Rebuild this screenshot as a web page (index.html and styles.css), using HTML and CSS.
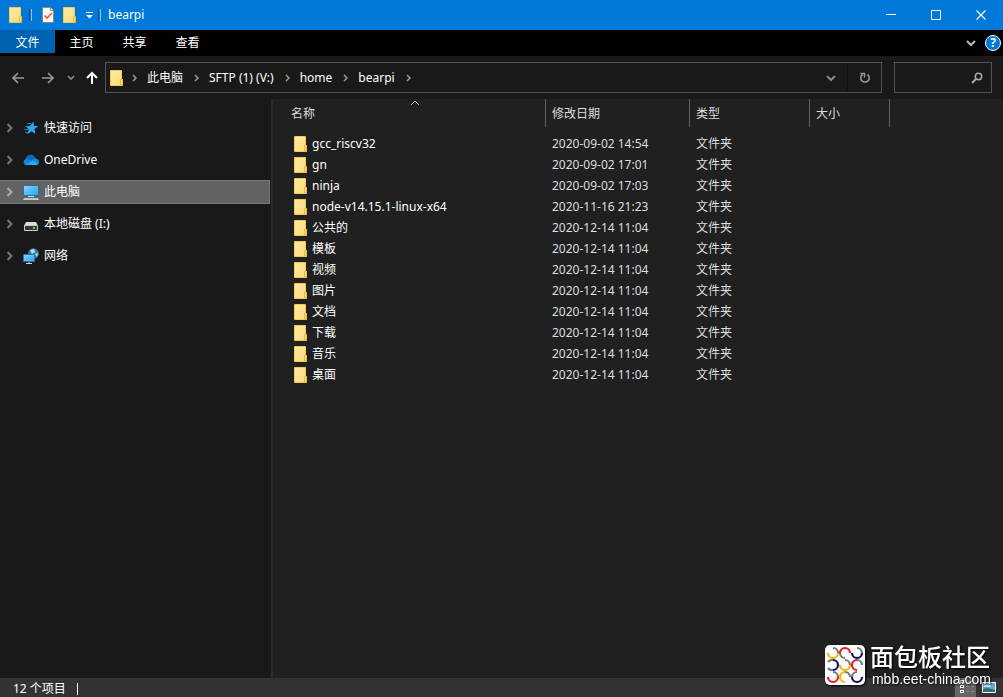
FILE: index.html
```html
<!DOCTYPE html>
<html lang="zh-CN">
<head>
<meta charset="utf-8">
<title>bearpi</title>
<link rel="stylesheet" href="styles.css">
</head>
<body>
<svg width="0" height="0" class="sprite" aria-hidden="true">
  <defs>
    <linearGradient id="gold" x2="1" y2="1"><stop offset="0" stop-color="#ffe9a6"/><stop offset="1" stop-color="#ffdc78"/></linearGradient>
    <linearGradient id="screen" x2="1" y2="1"><stop offset="0" stop-color="#8ad4ff"/><stop offset="1" stop-color="#20a4f8"/></linearGradient>
    <symbol id="folder" viewBox="0 0 16 16"><path d="M1.500.500h11v9h1v6h-12z" fill="url(#gold)" stroke="#f2cc4c"/><path d="M11.500 15V9.500h2V15z" fill="#ffe08a" stroke="#e5bb3a"/></symbol>
    <symbol id="right" viewBox="0 0 8 12"><path d="M1.500 2l4 4-4 4" fill="none" stroke="currentColor" stroke-width="2"/></symbol>
    <symbol id="crumb" viewBox="0 0 8 8"><path d="M2 1l3 3-3 3" fill="none" stroke="currentColor" stroke-width="1.500"/></symbol>
    <symbol id="down" viewBox="0 0 12 8"><path d="M2 2l4 4 4-4" fill="none" stroke="currentColor" stroke-width="2"/></symbol>
  </defs>
</svg>
<header class="titlebar">
  <svg class="icon" aria-hidden="true"><use href="#folder"/></svg>
  <span class="separator"></span>
  <button class="quick" aria-label="属性"><svg class="icon" viewBox="0 0 16 16"><path d="M2.500.500h8l3 3v12h-11z" fill="#f8f8f8" stroke="#888"/><path d="M10.500.500v3h3" fill="#fff" stroke="#888"/><path d="M4.500 8.500l2.500 2.500 5-5" fill="none" stroke="#ee6027" stroke-width="1.700"/></svg></button>
  <button class="quick" aria-label="新建文件夹"><svg class="icon"><use href="#folder"/></svg></button>
  <button class="customize" aria-label="自定义"><svg viewBox="0 0 8 8"><path d="M1 1.500h7" stroke="#fff"/><path d="M1 4h7L4.500 7.500z" fill="#fff"/></svg></button>
  <span class="separator"></span>
  <h1>bearpi</h1>
  <div class="window-controls">
    <button aria-label="最小化"><svg viewBox="0 0 12 12"><path d="M1 5.500h10" stroke="#fff"/></svg></button>
    <button aria-label="最大化"><svg viewBox="0 0 12 12"><path d="M1.500 1.500h9v9h-9z" fill="none" stroke="#fff"/></svg></button>
    <button aria-label="关闭"><svg viewBox="0 0 12 12"><path d="M1.500 1.500l9 9m0-9l-9 9" stroke="#fff" stroke-width="1.200"/></svg></button>
  </div>
</header>
<nav class="ribbon">
  <button class="tab file-tab">文件</button><button class="tab">主页</button><button class="tab">共享</button><button class="tab">查看</button>
  <button class="expand" aria-label="展开功能区"><svg class="down"><use href="#down"/></svg></button>
  <button class="help" aria-label="帮助">?</button>
</nav>
<div class="toolbar">
  <button class="nav" aria-label="后退"><svg viewBox="0 0 14 12"><path d="M13 6H2m5-5L2 6l5 5" fill="none" stroke="#999" stroke-width="1.700"/></svg></button>
  <button class="nav forward" aria-label="前进"><svg viewBox="0 0 14 12"><path d="M1 6h11M7 1l5 5-5 5" fill="none" stroke="#999" stroke-width="1.700"/></svg></button>
  <button class="recent" aria-label="最近浏览的位置"><svg viewBox="0 0 8 6"><path d="M1 1l3 3 3-3" fill="none" stroke="#8a8a8a" stroke-width="1.700"/></svg></button>
  <button class="up" aria-label="上移"><svg viewBox="0 0 14 14"><path d="M7 13V2M2 7l5-5 5 5" fill="none" stroke="#fff" stroke-width="2"/></svg></button>
  <div class="address">
    <svg class="icon" aria-hidden="true"><use href="#folder"/></svg>
    <svg class="crumb"><use href="#crumb"/></svg><button class="place">此电脑</button>
    <svg class="crumb"><use href="#crumb"/></svg><button class="place">SFTP (1) (V:)</button>
    <svg class="crumb"><use href="#crumb"/></svg><button class="place">home</button>
    <svg class="crumb"><use href="#crumb"/></svg><button class="place">bearpi</button>
    <svg class="crumb"><use href="#crumb"/></svg>
    <button class="history" aria-label="以前的位置"><svg class="down"><use href="#down"/></svg></button>
    <button class="refresh" aria-label="刷新"><svg viewBox="0 0 12 12"><path d="M8.500 2.500a4.200 4.200 0 1 1-5 0" fill="none" stroke="#999" stroke-width="1.600"/><path d="M1.500 1.500h4v4" fill="none" stroke="#999" stroke-width="1.500"/></svg></button>
  </div>
  <label class="search"><input type="search" aria-label="搜索"><svg viewBox="0 0 12 12"><circle cx="7.500" cy="4.500" r="3.200" fill="none" stroke="#aaa" stroke-width="1.500"/><path d="M5 7l-4 4" stroke="#aaa" stroke-width="2"/></svg></label>
</div>
<main>
  <nav class="sidebar">
    <a href="#quick"><svg class="arrow"><use href="#right"/></svg><svg class="icon" viewBox="0 0 16 16"><path d="M10.300 1.500l.8 4.500 4.400.300-4 2.700 1 5-4-2.700-4.200 3 1.400-4.800L3 6.500l4.300-.700z" fill="#2aa9f5"/><path d="M4 3.500h4M2 6.500h3M1 9.500h4M2 12.500h3" stroke="#1680c8"/></svg><span>快速访问</span></a>
    <a href="#onedrive"><svg class="arrow"><use href="#right"/></svg><svg class="icon" viewBox="0 0 16 16"><path d="M2.500 7A5 5 0 0 1 12 5.500L14 8l-7 3z" fill="#0868bb"/><path d="M2 13a3.400 3.400 0 0 1 1-6q3-.500 6 2l-6 4z" fill="#1386db"/><path d="M9 8a4 4 0 0 1 5-1 3.200 3.200 0 0 1 0 6H8z" fill="#1288dc"/><path d="M2 13l8-4.500 5 3.500q0 1-2 1z" fill="#2ca9ec"/></svg><span>OneDrive</span></a>
    <a href="#pc" class="selected" aria-current="page"><svg class="arrow"><use href="#right"/></svg><svg class="icon" viewBox="0 0 16 16"><path d="M.500 1.500h15v10H.500z" fill="url(#screen)" stroke="#346b90"/><path d="M5 12.500h6" stroke="#ddd"/><path d="M1 14h14l1 2H0z" fill="#bac8d0"/></svg><span>此电脑</span></a>
    <a href="#disk"><svg class="arrow"><use href="#right"/></svg><svg class="icon" viewBox="0 0 16 16"><path d="M3 6h10l2 4H1z" fill="#ddd"/><path d="M1.500 9.500h13v5h-13z" fill="#363636" stroke="#ccc"/><path d="M10 12h2" stroke="#39e34f" stroke-width="2"/></svg><span>本地磁盘 (I:)</span></a>
    <a href="#network"><svg class="arrow"><use href="#right"/></svg><svg class="icon" viewBox="0 0 16 16"><circle cx="10.500" cy="5.500" r="5.300" fill="#377e9d"/><path d="M7 2l4-1 1 3-3 2zm5 4l3-1-1 4z" fill="#b5dcea"/><path d="M.500 6.500h11v7H.500z" fill="url(#screen)" stroke="#2375a5"/><path d="M6 14v1.500M3 15.500h6" stroke="#ccd5da"/></svg><span>网络</span></a>
  </nav>
  <section class="files">
    <table>
      <colgroup><col class="name-col"><col class="date-col"><col class="type-col"><col class="size-col"><col></colgroup>
      <thead><tr><th class="name">名称<svg class="sort" viewBox="0 0 8 5"><path d="M0 5l4-4 4 4" fill="none" stroke="#aaa"/></svg></th><th>修改日期</th><th>类型</th><th>大小</th><th class="rest"></th></tr></thead>
      <tbody>
        <tr><td class="name"><div><svg class="icon"><use href="#folder"/></svg>gcc_riscv32</div></td><td>2020-09-02 14:54</td><td>文件夹</td><td></td><td></td></tr>
        <tr><td class="name"><div><svg class="icon"><use href="#folder"/></svg>gn</div></td><td>2020-09-02 17:01</td><td>文件夹</td><td></td><td></td></tr>
        <tr><td class="name"><div><svg class="icon"><use href="#folder"/></svg>ninja</div></td><td>2020-09-02 17:03</td><td>文件夹</td><td></td><td></td></tr>
        <tr><td class="name"><div><svg class="icon"><use href="#folder"/></svg>node-v14.15.1-linux-x64</div></td><td>2020-11-16 21:23</td><td>文件夹</td><td></td><td></td></tr>
        <tr><td class="name"><div><svg class="icon"><use href="#folder"/></svg>公共的</div></td><td>2020-12-14 11:04</td><td>文件夹</td><td></td><td></td></tr>
        <tr><td class="name"><div><svg class="icon"><use href="#folder"/></svg>模板</div></td><td>2020-12-14 11:04</td><td>文件夹</td><td></td><td></td></tr>
        <tr><td class="name"><div><svg class="icon"><use href="#folder"/></svg>视频</div></td><td>2020-12-14 11:04</td><td>文件夹</td><td></td><td></td></tr>
        <tr><td class="name"><div><svg class="icon"><use href="#folder"/></svg>图片</div></td><td>2020-12-14 11:04</td><td>文件夹</td><td></td><td></td></tr>
        <tr><td class="name"><div><svg class="icon"><use href="#folder"/></svg>文档</div></td><td>2020-12-14 11:04</td><td>文件夹</td><td></td><td></td></tr>
        <tr><td class="name"><div><svg class="icon"><use href="#folder"/></svg>下载</div></td><td>2020-12-14 11:04</td><td>文件夹</td><td></td><td></td></tr>
        <tr><td class="name"><div><svg class="icon"><use href="#folder"/></svg>音乐</div></td><td>2020-12-14 11:04</td><td>文件夹</td><td></td><td></td></tr>
        <tr><td class="name"><div><svg class="icon"><use href="#folder"/></svg>桌面</div></td><td>2020-12-14 11:04</td><td>文件夹</td><td></td><td></td></tr>
      </tbody>
    </table>
  </section>
</main>
<footer class="status">
  <span class="count">12 个项目</span>
  <div class="views">
    <button class="active" aria-label="详细信息"><svg viewBox="0 0 20 18"><path d="M4 1h4v3H4zm0 5h4v3H4zm0 5h4v3H4z" fill="#fff"/><path d="M5 2.500h2m-2 10h2" stroke="#b44"/><path d="M5 7.500h2" stroke="#357"/><path d="M10 2.500h3m2 0h3m-8 5h3m2 0h3m-8 5h3m2 0h3" stroke="#888"/></svg></button>
    <button aria-label="大缩略图"><svg viewBox="0 0 14 12"><path d="M.500.500h13v10H.500z" fill="#62a6d5" stroke="#fff"/><path d="M2 3h7v2H2z" fill="#c9e6f4"/><path d="M1 7l4-1 8 2v2H1z" fill="#317069"/></svg></button>
  </div>
</footer>
<aside class="watermark">
  <svg viewBox="0 0 40 40" aria-hidden="true"><rect width="40" height="40" rx="5" fill="#fff"/><g fill="none" stroke-width="2.200"><path d="M8 3a5 5 0 0 1 5 5M15 8a5 5 0 0 0 5 5M32 3a5 5 0 0 1 5 5M3 17a5 5 0 0 1 5-2M3 23a5 5 0 0 0 5 2M20 15a5 5 0 0 1 5 5M32 15a5 5 0 0 1 5 5M8 27a5 5 0 0 1 5 5M20 27a5 5 0 0 1 5 5M27 32a5 5 0 0 1 5-5" stroke="#727b80"/><path d="M3 8a5 5 0 0 0 10 0M15 20a5 5 0 0 0 10 0M20 37a5 5 0 0 1 0-10" stroke="#fbb400"/><path d="M15 8a5 5 0 0 1 10 0M32 15a5 5 0 0 0 0 10M3 32a5 5 0 0 0 10 0" stroke="#ef1725"/><path d="M27 8a5 5 0 0 0 10 0M8 15a5 5 0 0 1 0 10M27 32a5 5 0 0 0 10 0" stroke="#11105b"/></g></svg>
  <div><strong>面包板社区</strong><span>mbb.eet-china.com</span></div>
</aside>
</body>
</html>
```
FILE: styles.css
```css
* { box-sizing: border-box; }
body {
  margin: 0;
  min-height: 100vh;
  display: flex;
  flex-direction: column;
  background: #191919;
  color: #fff;
  font: 12px/16px "Noto Sans", "Noto Sans CJK SC", sans-serif;
}
button { padding: 0; border: 0; background: none; color: inherit; font: inherit; display: flex; align-items: center; justify-content: center; }
svg { display: block; flex: none; }
.sprite { position: absolute; }
.icon { width: 16px; height: 16px; }
.down { width: 12px; height: 8px; }

.titlebar { height: 30px; display: flex; align-items: center; background: #0078d7; padding-left: 8px; }
.titlebar h1 { margin: 0 0 0 7px; font-size: 12px; font-weight: 400; }
.separator { width: 3px; height: 12px; margin-left: 5px; border-left: 1px solid #0a4f88; border-right: 1px solid #9abfdf; }
.quick { margin-left: 8px; }
.quick + .quick { margin-left: 6px; }
.customize { margin-left: 7px; }
.customize svg { width: 8px; height: 8px; }
.window-controls { margin-left: auto; display: flex; align-self: stretch; }
.window-controls button { width: 45px; }
.window-controls svg { width: 12px; height: 12px; }

.ribbon { height: 26px; display: flex; background: #000; }
.tab { width: 53px; height: 26px; }
.file-tab { width: 55px; height: 23px; padding-top: 2px; background: #0063b1; }
.expand { margin-left: auto; width: 28px; color: #bbb; }
.help { width: 16px; height: 16px; margin: 5px 2px 0 0; border: 1px solid #fff; border-radius: 50%; background: #0078d7; font-weight: 700; }

.toolbar { height: 43px; padding: 6px 11px; display: flex; align-items: center; }
.nav svg { width: 14px; height: 12px; }
.forward { margin-left: 16px; }
.recent { margin-left: 12px; }
.recent svg { width: 8px; height: 6px; }
.up { margin-left: 10px; }
.up svg { width: 14px; height: 14px; }
.address { flex: 1; height: 31px; margin-left: 6px; padding-left: 3px; display: flex; align-items: center; border: 1px solid #535353; }
.crumb { width: 8px; height: 8px; margin: 0 8px 0 10px; color: #999; }
.icon + .crumb { margin-left: 6px; }
.history { margin-left: auto; width: 34px; height: 100%; color: #888; border-right: 1px solid #111; }
.refresh { width: 33px; }
.refresh svg { width: 12px; height: 12px; }
.search { width: 98px; height: 31px; margin-left: 12px; padding-right: 8px; display: flex; align-items: center; border: 1px solid #535353; }
.search input { flex: 1; min-width: 0; border: 0; background: none; color: inherit; outline: 0; }
.search svg { width: 12px; height: 12px; }

main { flex: 1; display: flex; }
.sidebar { width: 271px; padding-top: 17px; display: flex; flex-direction: column; gap: 8px; }
.sidebar a { height: 24px; margin-right: 1px; padding-left: 5px; display: flex; align-items: center; color: inherit; text-decoration: none; border: 1px solid transparent; }
.sidebar .selected { background: #626262; border-color: #777; border-left: 0; padding-left: 6px; }
.arrow { width: 8px; height: 12px; margin-right: 9px; color: #777; }
.selected .arrow { color: #aaa; }
.sidebar span { margin-left: 5px; }

.files { flex: 1; background: #202020; border-left: 2px solid #2b2b2b; }
table { width: 100%; table-layout: fixed; border-collapse: separate; border-spacing: 0; }
.name-col { width: 273px; }
.date-col { width: 144px; }
.type-col { width: 120px; }
.size-col { width: 80px; }
th { height: 28px; padding: 2px 6px 0; border-right: 1px solid #636363; text-align: left; font-weight: 400; color: #dedede; }
th.name { position: relative; padding-left: 18px; }
th.rest { border: 0; }
.sort { position: absolute; top: 1px; left: 138px; width: 8px; height: 5px; }
tbody::before { content: ""; display: block; height: 6px; }
td { height: 21px; padding: 0 6px; color: #dedede; }
td.name { padding-left: 20px; color: #fff; }
td.name div { display: flex; align-items: center; gap: 3px; }

.status { height: 19px; padding: 0 7px 0 13px; display: flex; align-items: center; justify-content: space-between; background: #333; }
.count { margin-top: 2px; padding-right: 11px; border-right: 1px solid #fff; line-height: 12px; }
.views { display: flex; align-self: stretch; gap: 6px; }
.views .active { width: 21px; background: #666; }
.active svg { width: 20px; height: 18px; }
.views button:last-child svg { width: 14px; height: 12px; }

.watermark { position: absolute; right: 12px; bottom: 11px; display: flex; align-items: center; gap: 5px; filter: drop-shadow(1px 1px 1px #000); }
.watermark > svg { width: 40px; height: 40px; }
.watermark strong, .watermark span { display: block; font-family: "Liberation Sans", "Noto Sans CJK SC", sans-serif; }
.watermark strong { font-size: 24px; line-height: 28px; font-weight: 500; }
.watermark span { padding-left: 2px; font-size: 14px; line-height: 14px; }
```
